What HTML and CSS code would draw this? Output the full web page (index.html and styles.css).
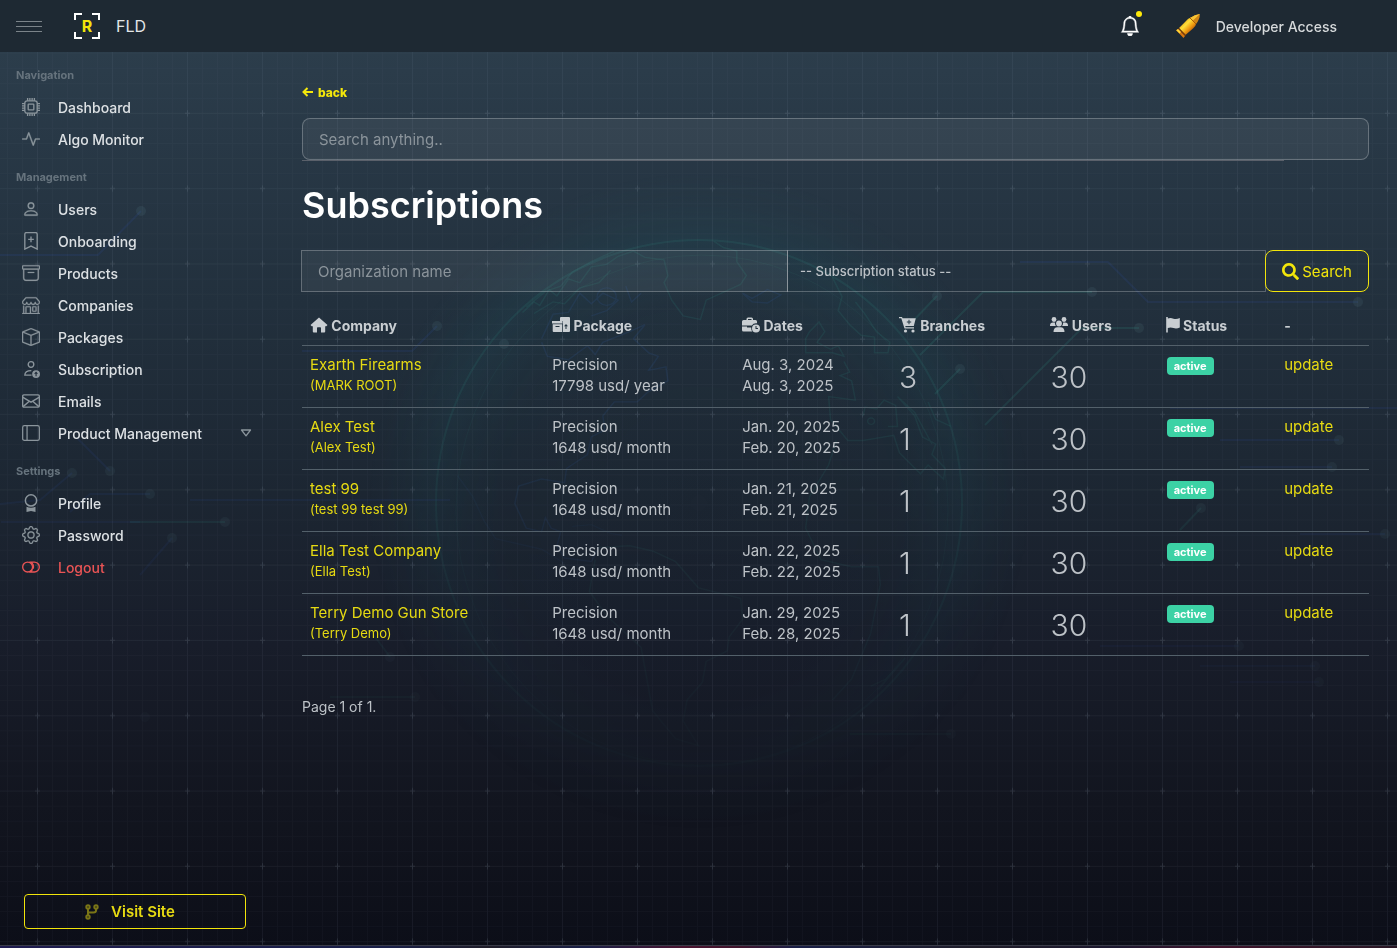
FILE: index.html
```
<!DOCTYPE html>
<html lang="en">

<head>
    <meta charset="UTF-8">
    <meta name="viewport" content="width=device-width, initial-scale=1.0">
    <title>FLD | Subscriptions</title>
    <link rel="stylesheet" href="styles.css">
</head>

<body>
    <!-- Backdrop: grid, circuit lines and globe -->
    <svg class="backdrop" viewBox="0 0 1397 948" preserveAspectRatio="xMidYMin slice" aria-hidden="true">
        <defs>
            <pattern id="grid-small" x="7" y="7.5" width="15" height="15.06" patternUnits="userSpaceOnUse">
                <path d="M.5 0V15.06M0 .5H15" stroke="#9fb4c4" stroke-opacity=".035" fill="none" />
            </pattern>
            <pattern id="grid-large" x="0" y="0" width="75" height="75.3" patternUnits="userSpaceOnUse">
                <path d="M37.5 0V75.3M0 37.8H75" stroke="#9fb4c4" stroke-opacity=".04" fill="none" />
                <path d="M37.5 35V41M35 37.8H40" stroke="#9fb4c4" stroke-opacity=".13" fill="none" />
            </pattern>
            <radialGradient id="glow" cx=".5" cy=".5" r=".5">
                <stop offset="0" stop-color="#20545a" stop-opacity="0" />
                <stop offset=".6" stop-color="#20545a" stop-opacity=".05" />
                <stop offset=".8" stop-color="#20606a" stop-opacity=".18" />
                <stop offset="1" stop-color="#20545a" stop-opacity="0" />
            </radialGradient>
            <linearGradient id="fade" x1="0" y1="0" x2="0" y2="1">
                <stop offset="0" stop-color="#fff" />
                <stop offset=".4" stop-color="#fff" stop-opacity=".8" />
                <stop offset=".8" stop-color="#fff" stop-opacity=".15" />
            </linearGradient>
            <mask id="fade-mask">
                <rect width="1397" height="948" fill="url(#fade)" />
            </mask>
        </defs>
        <g mask="url(#fade-mask)">
            <circle cx="699" cy="503" r="330" fill="url(#glow)" />
            <g fill="none" stroke="#2f8d80" stroke-opacity=".18">
                <circle cx="699" cy="503" r="263" stroke-width="2" />
                <ellipse cx="702" cy="510" rx="246" ry="255" stroke-opacity=".1" />
                <g transform="translate(400 230) scale(.3827 .3508)" stroke-width="4">
                    <path d="M320 235L350 205 365 215 390 170 410 188 440 140 470 150 500 105 540 98 570 75 610 60 640 78 690 85 700 130 690 150 710 200 740 245 785 255 800 200 840 180 890 155 905 130 880 90 880 60 845 50 820 32" />
                    <path d="M330 220L380 175 420 160 450 120 500 90 560 60M350 238L400 205 430 210 470 165 520 150 550 115" />
                    <path d="M1130 135L1155 190 1145 230 1175 270 1205 300 1240 305 1240 350 1275 350 1280 320 1245 290 1215 240 1190 205M1070 290L1095 262 1110 290 1090 320 1125 340 1145 330 1160 360 1130 350 1100 350 1060 350 1060 310z" />
                    <path d="M1160 375L1175 405 1150 415 1180 430 1190 485 1120 475 1125 540 1140 560 1170 600 1210 600 1290 585 1305 635 1360 695 1380 670 1420 710 1425 680 1390 640 1400 610 1365 590 1345 530 1300 475 1345 520 1390 610M1210 530L1215 505 1245 510 1265 485 1295 500 1300 560 1275 560M1222 545a9 9 0 1 0 18 0a9 9 0 1 0-18 0" />
                    <path d="M1140 600L1120 670 1070 760 1060 850 1100 940 1180 960 1250 960 1255 1010 1230 1150 1180 1280 1130 1340M1230 1300L1270 1280 1320 1220 1250 1310M1380 490L1400 540 1440 560" />
                </g>
            </g>
            <g fill="none" stroke="#3359a0" stroke-opacity=".2" stroke-width="4" transform="translate(400 230) scale(.3827 .3508)">
                <path d="M370 310L400 240 440 235 470 180 500 210 530 180 570 200 540 230 500 245M515 190a25 25 0 1 0 50 0a25 25 0 1 0-50 0M590 160L605 205 630 180M895 180L920 195 960 170 995 185 960 208 920 205z" />
                <path d="M370 320L385 360 440 370 490 330 510 355 530 320 600 290 640 270 610 310 650 350 675 360 650 400 695 390 700 430 650 460 620 490 560 490 530 530 535 570 500 590 490 640 435 680 430 720 370 710 310 730 300 780 330 850 370 860 380 820 395 850 420 860 410 900 430 935 500 945 520 905" />
                <path d="M450 845L500 840 550 865 580 870M150 700L190 760 220 830 250 880 370 910 430 950" stroke-opacity=".12" />
                <path d="M520 905L600 900 660 915 720 945 780 1020 890 1050 895 1110 860 1160 855 1200 800 1230 790 1290 750 1340 740 1400 780 1470 720 1450 660 1370 630 1190 540 1100 495 1030 510 940" stroke="#2f8d80" stroke-opacity=".16" />
            </g>
            <g fill="none" stroke="#2f4c9a" stroke-opacity=".2" stroke-width="2">
                <path d="M0 255H98L141 211M0 504L40 500 72 473M77 438L110 471M70 512L90 494H150M140 522H1M302 351H412L437 326M1020 262H1108L1148 302H1358M1220 440H1339M1240 467H1332M1170 408H1397M190 500H450M140 575L172 538M1100 646H1239M1200 666H1315M1230 682H1319M1300 534H1385" />
            </g>
            <g fill="none" stroke="#2f8d80" stroke-opacity=".22" stroke-width="2">
                <path d="M920 355L983 292H1092M912 322L937 296M985 425L1082 328H1139M935 394L960 369M130 522H225M370 630L390 657M330 697H415M850 734H951M1180 530L1201 508" />
            </g>
            <g fill="#6f9c9f" fill-opacity=".13">
                <circle cx="141" cy="211" r="5" /><circle cx="72" cy="473" r="5" /><circle cx="110" cy="471" r="5" />
                <circle cx="150" cy="494" r="5" /><circle cx="225" cy="522" r="5" /><circle cx="172" cy="538" r="5" />
                <circle cx="437" cy="326" r="5" /><circle cx="504" cy="344" r="5" /><circle cx="937" cy="296" r="5" />
                <circle cx="1092" cy="292" r="5" /><circle cx="1139" cy="328" r="5" /><circle cx="1358" cy="302" r="5" />
                <circle cx="960" cy="369" r="5" /><circle cx="1339" cy="440" r="5" /><circle cx="1332" cy="467" r="5" />
                <circle cx="1201" cy="508" r="5" /><circle cx="1385" cy="534" r="5" /><circle cx="1239" cy="646" r="5" />
                <circle cx="1315" cy="666" r="5" /><circle cx="1319" cy="682" r="5" /><circle cx="951" cy="734" r="5" />
                <circle cx="415" cy="697" r="5" /><circle cx="390" cy="657" r="5" /><circle cx="145" cy="717" r="5" />
            </g>
        </g>
        <rect width="1397" height="948" fill="url(#grid-small)" />
        <rect width="1397" height="948" fill="url(#grid-large)" />
    </svg>

    <header class="header">
        <button class="menu-toggle" type="button" aria-label="Toggle menu"><span></span><span></span><span></span></button>
        <a class="brand" href="#">
            <span class="brand-mark">
                <svg viewBox="0 0 26 26" aria-hidden="true"><path d="M1 7V1H8M18 1H25V7M25 19V25H18M8 25H1V19" /></svg>
                <b>R</b>
            </span>
            <span>FLD</span>
        </a>
        <div class="header-right">
            <a class="bell" href="#" aria-label="Notifications">
                <svg viewBox="0 0 16 16"><path d="M8 16a2 2 0 0 0 2-2H6a2 2 0 0 0 2 2M8 1.918l-.797.161A4 4 0 0 0 4 6c0 .628-.134 2.197-.459 3.742-.16.767-.376 1.566-.663 2.258h10.244c-.287-.692-.502-1.49-.663-2.258C12.134 8.197 12 6.628 12 6a4 4 0 0 0-3.203-3.92zM14.22 12c.223.447.481.801.78 1H1c.299-.199.557-.553.78-1C2.68 10.2 3 6.88 3 6c0-2.42 1.72-4.44 4.005-4.901a1 1 0 1 1 1.99 0A5 5 0 0 1 13 6c0 .88.32 4.2 1.22 6" stroke="currentColor" stroke-width=".4" /></svg>
                <span class="dot"></span>
            </a>
            <a class="account" href="#">
                <svg viewBox="0 0 24 24" aria-hidden="true">
                    <defs>
                        <linearGradient id="brass" x1="0" y1="0" x2="1" y2="1">
                            <stop offset=".2" stop-color="#e8a213" />
                            <stop offset=".4" stop-color="#ffe03a" />
                            <stop offset=".6" stop-color="#f09a10" />
                            <stop offset=".8" stop-color="#a84a06" />
                        </linearGradient>
                    </defs>
                    <path d="M3 14L10 7Q12 4 15 3.500L20.500 8.500Q20 12 17 14.500L9.500 21z" fill="url(#brass)" />
                    <path d="M14 4Q19 .500 23.800 0 24 5 20 10z" fill="#d08414" />
                    <path d="M14 4Q19 .500 23.800 0L17 6.500z" fill="#f7c436" />
                    <path d="M14 4L20 10" stroke="#a85c08" />
                    <path d="M2.500 14.500L9.500 21.500" stroke="#7d3a07" stroke-width="1.200" />
                    <path d="M.200 16.200L2 15 9 22 7.500 24z" fill="#d9760f" />
                    <path d="M.200 16.200L2 15 5 18 3.600 19.600z" fill="#ffd437" />
                </svg>
                <span>Developer Access</span>
            </a>
        </div>
    </header>

    <div class="layout">
        <nav class="sidebar">
            <div class="nav-group">
                <h2>Navigation</h2>
                <a href="#">
                    <svg viewBox="0 0 16 16"><g fill="none" stroke="currentColor" stroke-width="1.2"><rect x="2.500" y="2.500" width="11" height="11" rx="2" /><rect x="5.500" y="5.500" width="5" height="5" rx=".500" /><path d="M5 0V2.500M7 0V2.500M9 0V2.500M11 0V2.500M5 13.500V16M7 13.500V16M9 13.500V16M11 13.500V16M0 5H2.500M0 7H2.500M0 9H2.500M0 11H2.500M13.500 5H16M13.500 7H16M13.500 9H16M13.500 11H16" /></g></svg>
                    Dashboard
                </a>
                <a href="#">
                    <svg viewBox="0 0 16 16"><path d="M6 2a.5.5 0 0 1 .47.33L10 12.036l1.530-4.208A.5.5 0 0 1 12 7.500h3.500a.5.5 0 0 1 0 1h-3.150l-1.880 5.170a.5.5 0 0 1-.94 0L6 3.964 4.470 8.171A.5.5 0 0 1 4 8.500H.5a.5.5 0 0 1 0-1h3.150l1.880-5.170A.5.5 0 0 1 6 2" stroke="currentColor" stroke-width=".3" /></svg>
                    Algo Monitor
                </a>
            </div>
            <div class="nav-group">
                <h2>Management</h2>
                <a href="#">
                    <svg viewBox="0 0 16 16"><path d="M8 8a3 3 0 1 0 0-6 3 3 0 0 0 0 6m2-3a2 2 0 1 1-4 0 2 2 0 0 1 4 0m4 8c0 1-1 1-1 1H3s-1 0-1-1 1-4 6-4 6 3 6 4m-1-.004c-.001-.246-.154-.986-.832-1.664C11.516 10.680 10.289 10 8 10s-3.516.68-4.168 1.332c-.678.678-.83 1.418-.832 1.664z" stroke="currentColor" stroke-width=".3" /></svg>
                    Users
                </a>
                <a href="#">
                    <svg viewBox="0 0 16 16"><g fill="none" stroke="currentColor" stroke-width="1.2"><path d="M2.500 15.200V2Q2.500.500 4 .500H12Q13.500.500 13.500 2V15.200L8 12.500z" /><path d="M8 4V9M5.500 6.500H10.500" /></g></svg>
                    Onboarding
                </a>
                <a href="#">
                    <svg viewBox="0 0 16 16"><path d="M0 2a1 1 0 0 1 1-1h14a1 1 0 0 1 1 1v2a1 1 0 0 1-1 1v7.500a2.500 2.500 0 0 1-2.500 2.500h-9A2.500 2.500 0 0 1 1 12.500V5a1 1 0 0 1-1-1zm2 3v7.500A1.500 1.500 0 0 0 3.500 14h9a1.500 1.500 0 0 0 1.500-1.500V5zm13-3H1v2h14zM5 7.500a.5.5 0 0 1 .5-.5h5a.5.5 0 0 1 0 1h-5a.5.5 0 0 1-.5-.5" stroke="currentColor" stroke-width=".2" /></svg>
                    Products
                </a>
                <a href="#">
                    <svg viewBox="0 0 16 16"><path d="M2.970 1.350A1 1 0 0 1 3.730 1h8.540a1 1 0 0 1 .76.35l2.609 3.044A1.500 1.500 0 0 1 16 5.370v.255a2.375 2.375 0 0 1-4.250 1.458A2.370 2.370 0 0 1 9.875 8 2.370 2.370 0 0 1 8 7.083 2.370 2.370 0 0 1 6.125 8a2.370 2.370 0 0 1-1.875-.917A2.375 2.375 0 0 1 0 5.625V5.370a1.500 1.500 0 0 1 .361-.976zm1.780 4.275a1.375 1.375 0 0 0 2.750 0 .5.5 0 0 1 1 0 1.375 1.375 0 0 0 2.750 0 .5.5 0 0 1 1 0 1.375 1.375 0 1 0 2.750 0V5.370a.5.5 0 0 0-.12-.325L12.270 2H3.730L1.120 5.045A.5.5 0 0 0 1 5.370v.255a1.375 1.375 0 0 0 2.750 0 .5.5 0 0 1 1 0M1.500 8.500A.5.5 0 0 1 2 9v6h1v-5a1 1 0 0 1 1-1h3a1 1 0 0 1 1 1v5h6V9a.5.5 0 0 1 1 0v6h.5a.5.5 0 0 1 0 1H.5a.5.5 0 0 1 0-1H1V9a.5.5 0 0 1 .5-.5M4 15h3v-5H4zm5-5a1 1 0 0 1 1-1h2a1 1 0 0 1 1 1v3a1 1 0 0 1-1 1h-2a1 1 0 0 1-1-1zm3 0h-2v3h2z" stroke="currentColor" stroke-width=".2" /></svg>
                    Companies
                </a>
                <a href="#">
                    <svg viewBox="0 0 16 16"><path d="M8.186 1.113a.5.5 0 0 0-.372 0L1.846 3.500 8 5.961 14.154 3.500zM15 4.239l-6.500 2.600v7.922l6.500-2.600V4.240zM7.500 14.762V6.838L1 4.239v7.923zM7.443.184a1.500 1.500 0 0 1 1.114 0l7.129 2.852A.5.5 0 0 1 16 3.500v8.662a1 1 0 0 1-.629.928l-7.185 2.874a.5.5 0 0 1-.372 0L.63 13.090a1 1 0 0 1-.63-.928V3.500a.5.5 0 0 1 .314-.464z" stroke="currentColor" stroke-width=".2" /></svg>
                    Packages
                </a>
                <a href="#">
                    <svg viewBox="0 0 16 16"><g fill="none" stroke="currentColor" stroke-width="1.2"><circle cx="8" cy="4" r="2.500" /><path d="M8.500 13.500H2.500C2.500 11 4.500 9.500 8.300 9.500" /></g><path fill-rule="evenodd" d="M12.500 9a3.500 3.500 0 1 1 0 7 3.500 3.500 0 0 1 0-7M12.500 10.300L10.700 12.200H12V14.500H13V12.200H14.300z" /></svg>
                    Subscription
                </a>
                <a href="#">
                    <svg viewBox="0 0 16 16"><g fill="none" stroke="currentColor" stroke-width="1.2"><rect x=".600" y="2.500" width="14.800" height="11" rx="1" /><path d="M.500 4.500L8 9 15.500 4.500M1 13L6.500 8.200M15 13L9.500 8.200" /></g></svg>
                    Emails
                </a>
                <a href="#">
                    <svg viewBox="0 0 16 16"><g fill="none" stroke="currentColor" stroke-width="1.1"><rect x=".600" y="1.500" width="14.800" height="13" rx="1.500" /><path d="M4.500 1.500V14.500" /></g></svg>
                    Product Management
                    <svg class="caret" viewBox="0 0 12 8"><path d="M1.500 1H10.500L6 6.800z" fill="none" stroke="currentColor" stroke-width="1.3" stroke-linejoin="round" /></svg>
                </a>
            </div>
            <div class="nav-group">
                <h2>Settings</h2>
                <a href="#">
                    <svg viewBox="0 0 16 16"><circle cx="8" cy="5.700" r="5" fill="none" stroke="currentColor" stroke-width="1.300" /><path d="M4 11.300Q8 13 12 11.300V16L8 15 4 16z" /></svg>
                    Profile
                </a>
                <a href="#">
                    <svg viewBox="0 0 16 16"><g stroke="currentColor" stroke-width=".2"><path d="M8 4.754a3.246 3.246 0 1 0 0 6.492 3.246 3.246 0 0 0 0-6.492M5.754 8a2.246 2.246 0 1 1 4.492 0 2.246 2.246 0 0 1-4.492 0" /><path d="M9.796 1.343c-.527-1.790-3.065-1.790-3.592 0l-.094.319a.873.873 0 0 1-1.255.52l-.292-.16c-1.640-.892-3.433.902-2.540 2.541l.159.292a.873.873 0 0 1-.52 1.255l-.319.094c-1.790.527-1.790 3.065 0 3.592l.319.094a.873.873 0 0 1 .52 1.255l-.16.292c-.892 1.640.901 3.434 2.541 2.540l.292-.159a.873.873 0 0 1 1.255.52l.094.319c.527 1.790 3.065 1.790 3.592 0l.094-.319a.873.873 0 0 1 1.255-.52l.292.16c1.640.893 3.434-.902 2.540-2.541l-.159-.292a.873.873 0 0 1 .52-1.255l.319-.094c1.790-.527 1.790-3.065 0-3.592l-.319-.094a.873.873 0 0 1-.52-1.255l.16-.292c.893-1.640-.902-3.433-2.541-2.540l-.292.159a.873.873 0 0 1-1.255-.52zm-2.633.283c.246-.835 1.428-.835 1.674 0l.094.319a1.873 1.873 0 0 0 2.693 1.115l.291-.16c.764-.415 1.600.42 1.184 1.185l-.159.292a1.873 1.873 0 0 0 1.116 2.692l.318.094c.835.246.835 1.428 0 1.674l-.319.094a1.873 1.873 0 0 0-1.115 2.693l.16.291c.415.764-.42 1.600-1.185 1.184l-.291-.159a1.873 1.873 0 0 0-2.693 1.116l-.094.318c-.246.835-1.428.835-1.674 0l-.094-.319a1.873 1.873 0 0 0-2.692-1.115l-.292.16c-.764.415-1.600-.42-1.184-1.185l.159-.291A1.873 1.873 0 0 0 1.945 8.930l-.319-.094c-.835-.246-.835-1.428 0-1.674l.319-.094A1.873 1.873 0 0 0 3.060 4.377l-.16-.292c-.415-.764.42-1.600 1.185-1.184l.292.159a1.873 1.873 0 0 0 2.692-1.115z" /></g></svg>
                    Password
                </a>
                <a class="logout" href="#">
                    <svg viewBox="0 0 16 16"><g fill="none" stroke="currentColor" stroke-width="1.200"><circle cx="5" cy="8" r="4.400" /><path d="M6.500 3.600H11A4.400 4.400 0 0 1 11 12.400H6.500A4.400 4.400 0 0 0 9.400 10.200M7.500 3.600A4.400 4.400 0 0 1 9.800 9.500" /></g></svg>
                    Logout
                </a>
            </div>
            <a class="visit" href="#">
                <svg viewBox="0 0 14 16" aria-hidden="true"><g fill="none" stroke="currentColor" stroke-width="2"><circle cx="3" cy="3" r="1.700" /><circle cx="11" cy="3" r="1.700" /><circle cx="3" cy="13" r="1.700" /><path d="M3 5V11M11 5V6.500Q11 8.500 8.500 8.500H3" /></g></svg>
                Visit Site
            </a>
        </nav>

        <main class="content">
            <a class="back" href="#">
                <svg viewBox="0 0 12 12" aria-hidden="true"><path d="M11 6H2M5.500 2L1.500 6 5.500 10" /></svg>
                back
            </a>
            <input class="search-all" type="search" aria-label="Search anything" placeholder="Search anything..">
            <hr>
            <h1>Subscriptions</h1>
            <form class="filters" action="" method="get">
                <input type="text" name="organization" aria-label="Organization name" placeholder="Organization name">
                <select name="status" aria-label="Subscription status">
                    <option>-- Subscription status --</option>
                </select>
                <button type="submit">
                    <svg viewBox="0 0 512 512" aria-hidden="true"><path d="M505 442.700L405.300 343c-4.500-4.500-10.600-7-17-7H372c27.600-35.300 44-79.700 44-128C416 93.100 322.900 0 208 0S0 93.100 0 208s93.100 208 208 208c48.300 0 92.700-16.400 128-44v16.300c0 6.400 2.500 12.500 7 17l99.700 99.700c9.400 9.400 24.600 9.400 33.900 0l28.300-28.300c9.400-9.400 9.400-24.600.1-34zM208 336c-70.700 0-128-57.200-128-128 0-70.700 57.200-128 128-128 70.700 0 128 57.200 128 128 0 70.700-57.200 128-128 128z" /></svg>
                    Search
                </button>
            </form>

            <table class="list">
                <thead>
                    <tr>
                        <th class="col-company"><svg viewBox="0 0 18 16"><path d="M9 .500L17.500 8 16.300 9.200H15.200V14.500Q15.200 15.500 14.200 15.500H11V11Q11 10.300 10.300 10.300H7.700Q7 10.300 7 11V15.500H3.800Q2.800 15.500 2.800 14.500V9.200H1.700L.500 8z" /></svg> Company</th>
                        <th class="col-package"><svg viewBox="0 0 18 16"><path fill-rule="evenodd" d="M8 1Q8 0 9 0H17Q18 0 18 1V14Q18 15 17 15H11V4H8zM14 7L12 9.300H13.500V12H14.500V9.300H16z" /><path fill-rule="evenodd" d="M0 4H10.500V6.500H0zM.700 7.300H10.200V15H1.700Q.700 15 .700 14zM3.500 9V10H7.500V9z" /></svg> Package</th>
                        <th class="col-dates"><svg viewBox="0 0 18 16"><path fill-rule="evenodd" d="M4.500 3V2Q4.500.500 6 .500H9.500Q11 .500 11 2V3H13.500Q15 3 15 4.500V6.300Q11.500 5.800 9.800 8.600H0V4.500Q0 3 1.500 3zM6 3H9.500V2H6zM0 9.600H5V10.600H9.200Q9 13 10.300 14.500H1.500Q0 14.500 0 13z" /><path fill-rule="evenodd" d="M14 7.500a4 4 0 1 1 0 8 4 4 0 0 1 0-8M13.500 9V12H16V11H14.500V9z" /></svg> Dates</th>
                        <th class="col-branches"><svg viewBox="0 0 18 16"><path fill-rule="evenodd" d="M0 0H3L3.600 1.300H16.800L14.800 9H6.300L6.600 10.300H15V11.500H5.500L2.300 1.300H0zM9.500 2.800V4.500H7.800V5.500H9.500V7.200H10.500V5.500H12.200V4.500H10.500V2.800z" /><circle cx="6.500" cy="14" r="1.600" /><circle cx="14" cy="14" r="1.600" /></svg> Branches</th>
                        <th class="col-users"><svg viewBox="0 0 18 16"><circle cx="4" cy="2.500" r="2.400" /><circle cx="14" cy="2.500" r="2.400" /><circle cx="9" cy="6.500" r="2.900" /><path d="M0 8.500Q0 5.500 3 5.500H4.800Q5 8 6 9H0zM18 8.500Q18 5.500 15 5.500H13.200Q13 8 12 9H18zM3.500 15Q3.500 10.300 7.500 10.300H10.500Q14.500 10.300 14.500 15z" /></svg> Users</th>
                        <th class="col-status"><svg class="flag" viewBox="0 0 14 16"><path d="M.200 0H1.800V1.500Q4.500.500 7.500 1.700 10.500 2.700 13.800 1V10.500Q10.500 12 7.500 11 4.500 10 1.800 11V15.500H.200z" /></svg> Status</th>
                        <th>-</th>
                    </tr>
                </thead>
                <tbody>
                    <tr>
                        <td><a href="#">Exarth Firearms <small>(MARK ROOT)</small></a></td>
                        <td>Precision<br>17798 usd/ year</td>
                        <td>Aug. 3, 2024<br>Aug. 3, 2025</td>
                        <td class="count">3</td>
                        <td class="count">30</td>
                        <td><span class="badge">active</span></td>
                        <td><a href="#">update</a></td>
                    </tr>
                    <tr>
                        <td><a href="#">Alex Test <small>(Alex Test)</small></a></td>
                        <td>Precision<br>1648 usd/ month</td>
                        <td>Jan. 20, 2025<br>Feb. 20, 2025</td>
                        <td class="count">1</td>
                        <td class="count">30</td>
                        <td><span class="badge">active</span></td>
                        <td><a href="#">update</a></td>
                    </tr>
                    <tr>
                        <td><a href="#">test 99 <small>(test 99 test 99)</small></a></td>
                        <td>Precision<br>1648 usd/ month</td>
                        <td>Jan. 21, 2025<br>Feb. 21, 2025</td>
                        <td class="count">1</td>
                        <td class="count">30</td>
                        <td><span class="badge">active</span></td>
                        <td><a href="#">update</a></td>
                    </tr>
                    <tr>
                        <td><a href="#">Ella Test Company <small>(Ella Test)</small></a></td>
                        <td>Precision<br>1648 usd/ month</td>
                        <td>Jan. 22, 2025<br>Feb. 22, 2025</td>
                        <td class="count">1</td>
                        <td class="count">30</td>
                        <td><span class="badge">active</span></td>
                        <td><a href="#">update</a></td>
                    </tr>
                    <tr>
                        <td><a href="#">Terry Demo Gun Store <small>(Terry Demo)</small></a></td>
                        <td>Precision<br>1648 usd/ month</td>
                        <td>Jan. 29, 2025<br>Feb. 28, 2025</td>
                        <td class="count">1</td>
                        <td class="count">30</td>
                        <td><span class="badge">active</span></td>
                        <td><a href="#">update</a></td>
                    </tr>
                </tbody>
            </table>
            <p class="pages">Page 1 of 1.</p>
        </main>
    </div>
    <div class="bottom-strip"></div>
</body>

</html>
```
FILE: styles.css
```
* {
    margin: 0;
    padding: 0;
    box-sizing: border-box;
}

/* General Body Styling */
body {
    font-family: Inter, Roboto, sans-serif;
    font-size: 14px;
    line-height: 21px;
    color: #bdc2c7;
    background: linear-gradient(to bottom, #2e404e 0%, #283846 15%, #22303d 32%, #1c2632 52%, #181d2a 68%, #12151f 85%, #0c0e18 100%);
    min-height: 100vh;
    display: flex;
    flex-direction: column;
}

a {
    color: #e6da12;
    text-decoration: none;
}

svg {
    fill: currentColor;
    flex: none;
}

input,
select,
button {
    font-family: inherit;
    color: inherit;
    background: none;
}

.backdrop {
    position: fixed;
    inset: 0;
    width: 100%;
    height: 100%;
    z-index: -1;
}

/* Header */
.header {
    height: 52px;
    padding: 0 60px 0 16px;
    display: flex;
    align-items: center;
    background: #1e2933;
}

.menu-toggle {
    width: 26px;
    display: flex;
    flex-direction: column;
    gap: 4px;
    border: none;
    cursor: pointer;
}

.menu-toggle span {
    height: 1px;
    background: #7b8389;
}

.brand {
    margin-left: 32px;
    display: flex;
    align-items: center;
    gap: 16px;
    font-size: 16px;
    color: #e3e6e8;
}

.brand-mark {
    display: grid;
    place-items: center;
    width: 26px;
    height: 26px;
}

.brand-mark svg,
.brand-mark b {
    grid-area: 1 / 1;
}

.brand-mark svg {
    width: 26px;
    height: 26px;
    fill: none;
    stroke: #fff;
    stroke-width: 2;
}

.brand-mark b {
    font-size: 16px;
    color: #f2e50b;
}

.header-right {
    margin-left: auto;
    display: flex;
    align-items: center;
    gap: 36px;
}

.bell {
    position: relative;
    color: #fff;
}

.bell svg {
    display: block;
    width: 20px;
    height: 20px;
}

.bell .dot {
    position: absolute;
    top: -5px;
    right: -2px;
    width: 6px;
    height: 6px;
    border-radius: 50%;
    background: #ffe90a;
}

.account {
    display: flex;
    align-items: center;
    gap: 16px;
    font-size: 14px;
    font-weight: 500;
    color: #d6d9db;
}

.account svg {
    width: 24px;
    height: 24px;
}

/* Sidebar */
.layout {
    flex: 1;
    display: flex;
}

.sidebar {
    flex: 0 0 270px;
    padding: 7px 24px 16px 16px;
    display: flex;
    flex-direction: column;
    gap: 6px;
}

.nav-group h2 {
    font-size: 11px;
    font-weight: 700;
    line-height: 32px;
    color: #66737d;
}

.nav-group a {
    height: 32px;
    margin-left: 6px;
    display: flex;
    align-items: center;
    gap: 18px;
    font-size: 14px;
    font-weight: 500;
    color: #dde1e4;
}

.nav-group svg {
    width: 18px;
    height: 18px;
    color: #8b959c;
}

.nav-group .caret {
    width: 12px;
    height: 8px;
    margin-left: auto;
    margin-right: -6px;
}

.nav-group .logout,
.nav-group .logout svg {
    color: #ea5455;
}

.visit {
    height: 35px;
    margin-top: auto;
    margin-left: 8px;
    padding-right: 10px;
    display: flex;
    align-items: center;
    justify-content: center;
    gap: 12px;
    border: 1px solid #f2e50b;
    border-radius: 4px;
    font-size: 15px;
    font-weight: 600;
}

.visit svg {
    width: 14px;
    height: 16px;
    opacity: .5;
}

/* Content */
.content {
    flex: 1;
    min-width: 0;
    padding: 30px 28px 30px 32px;
}

.back {
    height: 20px;
    display: flex;
    align-items: center;
    gap: 4px;
    font-size: 12px;
    font-weight: 800;
    color: #f5e80b;
}

.back svg {
    width: 12px;
    height: 12px;
    fill: none;
    stroke: currentColor;
    stroke-width: 2;
}

input {
    border: 1px solid rgba(255, 255, 255, .25);
    background: rgba(255, 255, 255, .06);
    font-size: 15px;
    padding: 0 16px;
}

input::placeholder {
    color: #8b949b;
}

.search-all {
    display: block;
    width: 100%;
    height: 42px;
    margin-top: 16px;
    border-radius: 8px;
}

hr {
    width: 92%;
    border: none;
    border-top: 1px solid #5a606a;
}

h1 {
    margin: 22px 0 23px;
    font-size: 36px;
    font-weight: 600;
    line-height: 44px;
    color: #fff;
}

.filters {
    height: 42px;
    display: flex;
}

.filters > * {
    margin-left: -1px;
}

.filters input,
.filters select {
    flex: 1;
    min-width: 0;
}

.filters select {
    appearance: none;
    padding: 0 12px;
    border: 1px solid rgba(255, 255, 255, .25);
    border-left-color: #8b949b;
    font-size: 13px;
    font-weight: 500;
}

.filters button {
    display: flex;
    align-items: center;
    gap: 3px;
    padding: 0 16px;
    border: 1px solid #f2e50b;
    border-radius: 8px;
    font-size: 15px;
    color: #f2e50b;
    cursor: pointer;
}

.filters button svg {
    width: 17px;
    height: 17px;
}

/* Subscriptions table */
.list {
    width: 100%;
    margin-top: 14px;
    table-layout: fixed;
    border-collapse: separate;
    border-spacing: 0;
    text-align: left;
    font-size: 15px;
}

.list th,
.list td {
    border-bottom: 1px solid #53606a;
    vertical-align: top;
}

.list th {
    height: 40px;
    padding: 0 8px;
    vertical-align: middle;
    font-size: 14px;
    font-weight: 700;
    color: #c9ced2;
    white-space: nowrap;
}

.list th svg {
    width: 18px;
    height: 16px;
    vertical-align: -2px;
}

.list th .flag {
    width: 14px;
}

.list td {
    padding: 8px 8px 11px;
}

.list small {
    display: block;
    font-size: 13px;
}

.list .count {
    padding: 10px 8px 9px;
    font-size: 30px;
    font-weight: 300;
    line-height: 42px;
}

.col-company {
    width: 22.7%;
}

.col-package {
    width: 17.8%;
}

.col-dates {
    width: 14.7%;
}

.col-branches {
    width: 14.2%;
}

.col-users {
    width: 10.8%;
}

.col-status {
    width: 11.1%;
}

.badge {
    display: block;
    width: max-content;
    margin: 3px 0 0 1px;
    padding: 0 7px;
    border-radius: 4px;
    background: #3cd2a5;
    color: #fff;
    font-size: 11px;
    font-weight: 700;
    line-height: 18px;
}

.pages {
    margin-top: 40px;
    font-size: 14px;
}

.bottom-strip {
    height: 3px;
    border-top: 1px solid #3a3c48;
    background: linear-gradient(to right, #1f1c50, #1a2048 28%, #201e2a 35%, #1a2048 42%, #4a1430 49%, #40142c 53%, #1a2048 57%, #201e2a 70%, #1c1830 80%, #40142c 87%, #2a1826);
}
```
